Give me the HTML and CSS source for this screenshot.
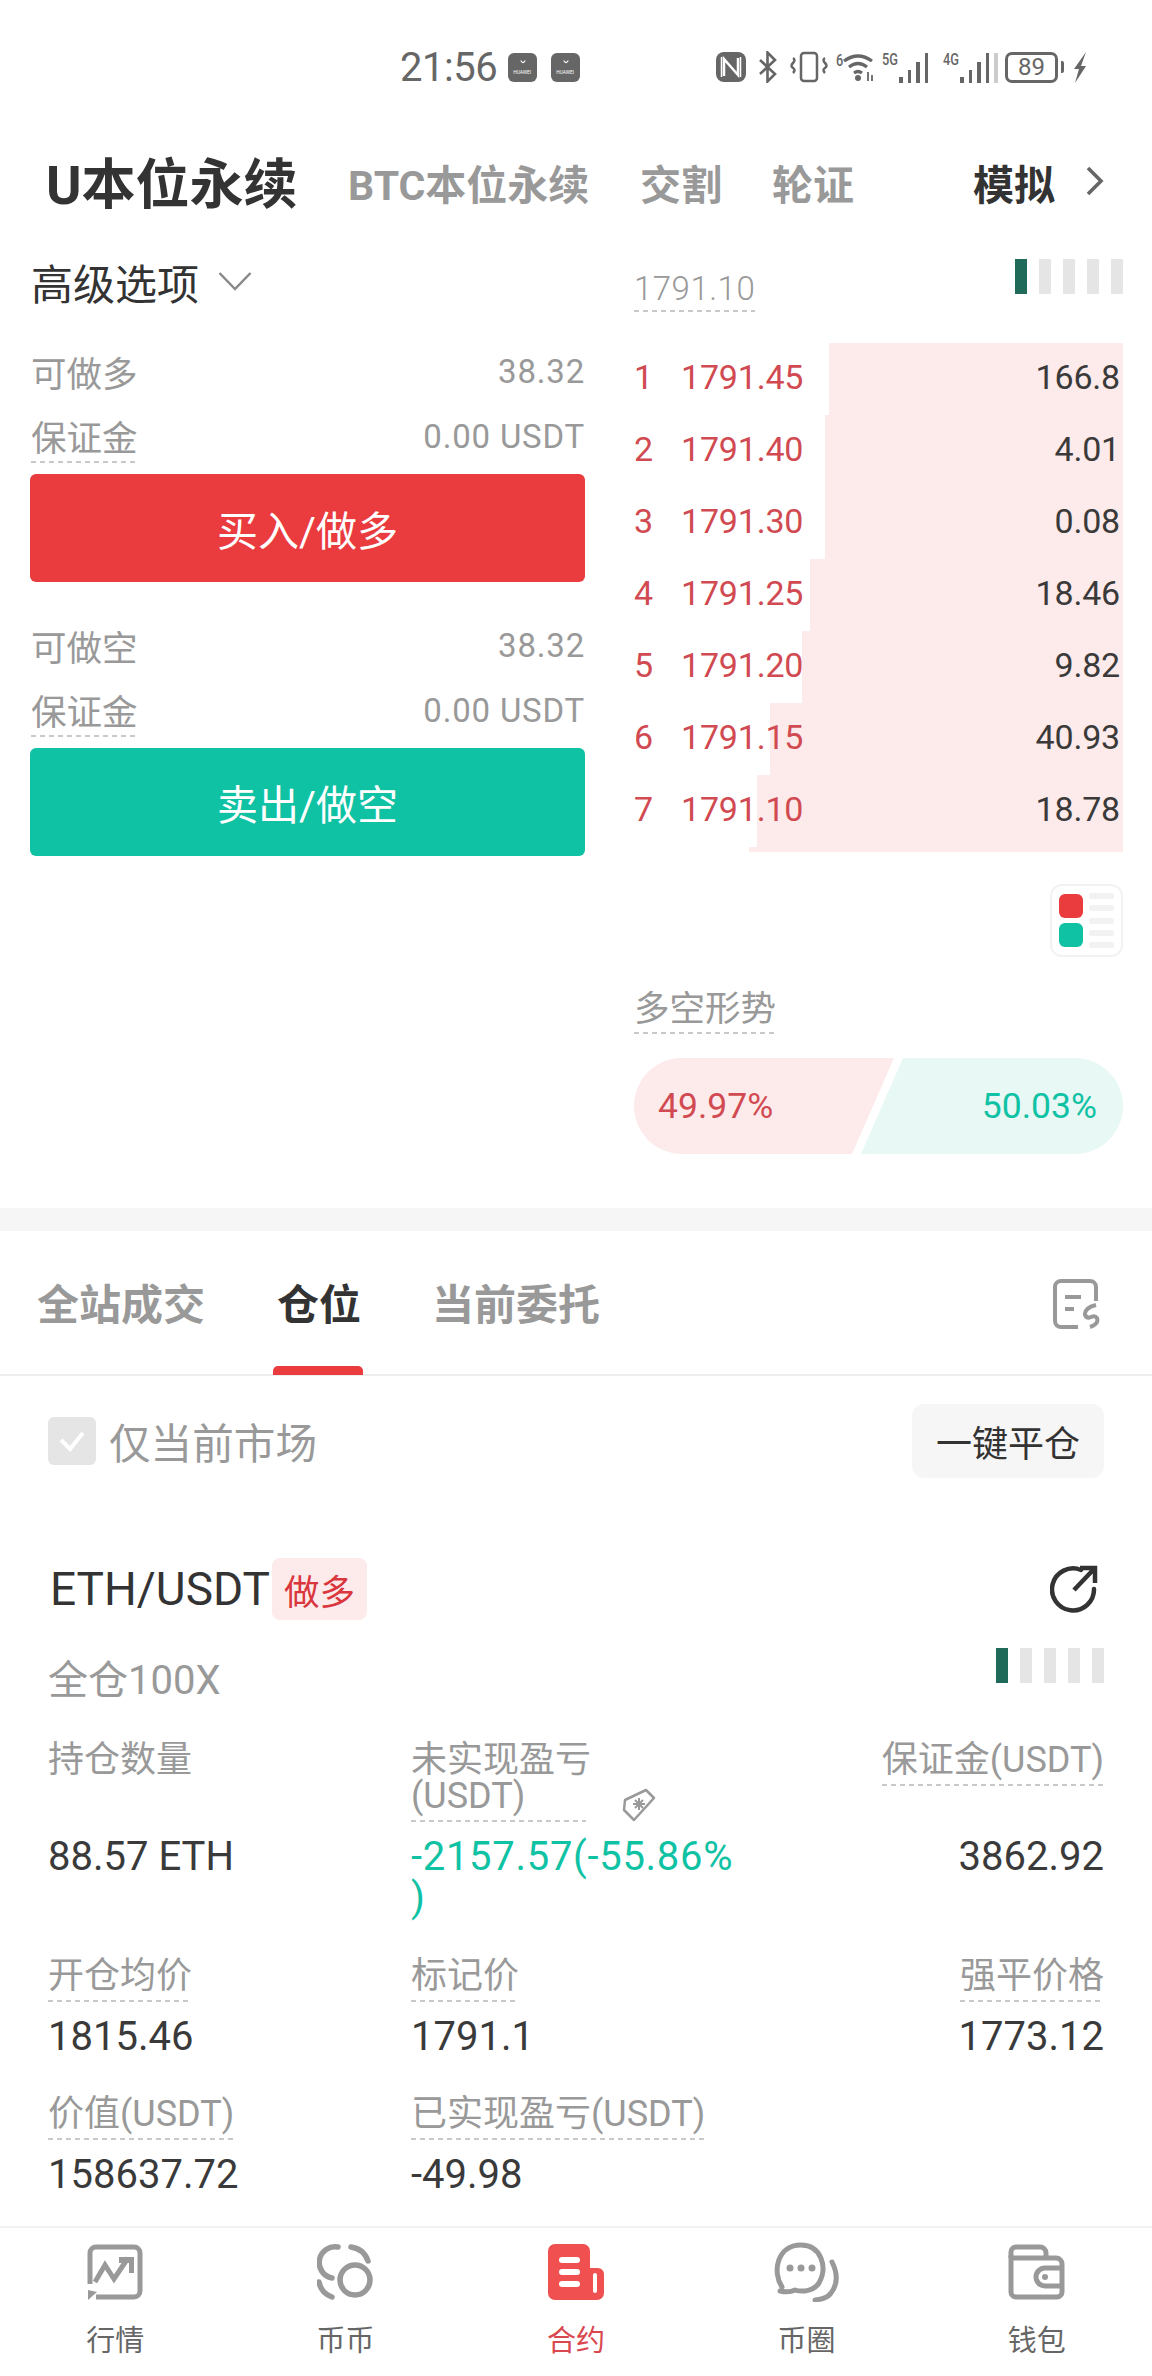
FILE: index.html
```html
<!DOCTYPE html>
<html lang="zh-CN">
<head>
<meta charset="utf-8">
<title>合约</title>
<link rel="stylesheet" href="styles.css">
</head>
<body>
<div class="page">
  <div class="status">
    <span class="clock">21:56</span>
    <span class="hw"><svg viewBox="0 0 28 28" width="14" height="8"><path d="M6 2q8 14 16 0" fill="none" stroke="#fff" stroke-width="4"/></svg><span class="hw-t">HUAWEI</span></span>
    <span class="hw hw2"><svg viewBox="0 0 28 28" width="14" height="8"><path d="M6 2q8 14 16 0" fill="none" stroke="#fff" stroke-width="4"/></svg><span class="hw-t">HUAWEI</span></span>
    <svg class="s-nfc" width="30" height="30" viewBox="0 0 30 30"><rect width="30" height="30" rx="8" fill="#666"/><path d="M8 24V7l14 16V6" fill="none" stroke="#fff" stroke-width="2.5"/><path d="M5.500 5v20M24.500 5v20" stroke="#fff" stroke-width="1.500"/></svg>
    <svg class="s-bt" width="21" height="32" viewBox="0 0 21 32"><path d="M3 9l15 14-7.500 7.500V1.500L18 9 3 23" fill="none" stroke="#666" stroke-width="2.600"/></svg>
    <svg class="s-vib" width="38" height="32" viewBox="0 0 38 32"><rect x="11" y="2" width="16" height="28" rx="3" fill="none" stroke="#666" stroke-width="2.500"/><path d="M3 7q3 2 0 5t0 5 0 5M35 7q-3 2 0 5t0 5 0 5" fill="none" stroke="#666" stroke-width="2.500"/></svg>
    <span class="s-wifi"><span class="s-tiny">6</span><svg width="32" height="30" viewBox="0 0 32 30"><path d="M2 9q14-10 28 0M7 15q9-7 18 0M12 21q4-3 8 0" fill="none" stroke="#666" stroke-width="3.200"/><circle cx="16" cy="26" r="3" fill="#666"/><path d="M26 20v9M30 23v6" stroke="#666" stroke-width="1.800"/></svg></span>
    <span class="s-sig"><span class="s-tiny">5G</span><span class="bars"><i class="b1"></i><i class="b2"></i><i class="b3"></i><i class="b4"></i></span></span>
    <span class="s-sig s-sig2"><span class="s-tiny">4G</span><span class="bars"><i class="b1"></i><i class="b2"></i><i class="b3"></i><i class="b4"></i><i class="b5"></i></span></span>
    <span class="batt"><span class="batt-num">89</span></span><span class="batt-tip"></span>
    <svg class="s-chg" width="14" height="32" viewBox="0 0 14 32"><path d="M13 1L1 18h5L2 32l11-17H8z" fill="#666"/></svg>
  </div>

  <div class="market-tabs">
    <span class="mt-main">U本位永续</span>
    <span class="mt mt-btc">BTC本位永续</span>
    <span class="mt mt-del">交割</span>
    <span class="mt mt-opt">轮证</span>
    <span class="mt-sim">模拟</span>
    <svg class="mt-more" width="20" height="32" viewBox="0 0 20 32"><path d="M3 3l13 13L3 29" fill="none" stroke="#666" stroke-width="3.600"/></svg>
  </div>

  <div class="trade">
    <div class="trade-left">
      <div class="adv"><span>高级选项</span><svg width="34" height="20" viewBox="0 0 34 20"><path d="M1.500 2L17 18 32.500 2" fill="none" stroke="#888" stroke-width="2.500"/></svg></div>
      <div class="kv"><span>可做多</span><span class="num">38.32</span></div>
      <div class="kv"><span class="dash">保证金</span><span class="num">0.00 USDT</span></div>
      <div class="btn btn-buy">买入/做多</div>
      <div class="kv kv-gap"><span>可做空</span><span class="num">38.32</span></div>
      <div class="kv"><span class="dash">保证金</span><span class="num">0.00 USDT</span></div>
      <div class="btn btn-sell">卖出/做空</div>
    </div>
    <div class="trade-right">
      <div class="book-head"><span class="dash price-head">1791.10</span><span class="lev"><i class="on"></i><i></i><i></i><i></i><i></i></span></div>
      <div class="book">
        <div class="row"><span class="bar" style="width:294px"></span><span class="rank">1</span><span class="px">1791.45</span><span class="qty">166.8</span></div>
        <div class="row"><span class="bar" style="width:298px"></span><span class="rank">2</span><span class="px">1791.40</span><span class="qty">4.01</span></div>
        <div class="row"><span class="bar" style="width:298px"></span><span class="rank">3</span><span class="px">1791.30</span><span class="qty">0.08</span></div>
        <div class="row"><span class="bar" style="width:313px"></span><span class="rank">4</span><span class="px">1791.25</span><span class="qty">18.46</span></div>
        <div class="row"><span class="bar" style="width:321px"></span><span class="rank">5</span><span class="px">1791.20</span><span class="qty">9.82</span></div>
        <div class="row"><span class="bar" style="width:353px"></span><span class="rank">6</span><span class="px">1791.15</span><span class="qty">40.93</span></div>
        <div class="row"><span class="bar" style="width:366px"></span><span class="rank">7</span><span class="px">1791.10</span><span class="qty">18.78</span></div>
        <div class="sliver"></div>
      </div>
      <div class="mode-wrap">
        <div class="mode">
          <div class="mode-blocks"><i class="mr"></i><i class="mg"></i></div>
          <div class="mode-lines"><i></i><i></i><i></i><i></i><i></i></div>
        </div>
      </div>
      <div class="trend-title"><span class="dash">多空形势</span></div>
      <div class="pill">
        <svg class="pill-bg" width="489" height="96" viewBox="0 0 489 96"><path d="M48 0H260L218 96H48A48 48 0 0 1 48 0Z" fill="#fdeaea"/><path d="M269 0H441A48 48 0 0 1 441 96H227Z" fill="#e7f8f5"/></svg>
        <span class="pill-l">49.97%</span><span class="pill-r">50.03%</span>
      </div>
    </div>
  </div>

  <div class="band"></div>

  <div class="pos-tabs">
    <span class="pt pt1">全站成交</span>
    <span class="pt pt-on">仓位</span>
    <span class="pt pt3">当前委托</span>
    <svg class="pt-ic" width="48" height="50" viewBox="0 0 48 50"><path d="M44 22V8a6 6 0 0 0-6-6H9a6 6 0 0 0-6 6v34a6 6 0 0 0 6 6h17" fill="none" stroke="#999" stroke-width="4"/><path d="M13 18h16M13 30h9" stroke="#999" stroke-width="4"/><path d="M44 26q-12 3-11 10 2 4 6 2t6 1q2 6-7 9" fill="none" stroke="#999" stroke-width="4"/></svg>
  </div>

  <div class="filter">
    <div class="only">
      <span class="check"><svg width="30" height="24" viewBox="0 0 30 24"><path d="M4 11l9 9L26 4" fill="none" stroke="#fff" stroke-width="4"/></svg></span>
      <span>仅当前市场</span>
    </div>
    <div class="close-all">一键平仓</div>
  </div>

  <div class="pos">
    <div class="pos-head">
      <span class="sym">ETH/USDT</span><span class="tag">做多</span>
      <svg class="share" width="48" height="50" viewBox="0 0 48 50"><path d="M31 6A21 21 0 1 0 44 25" fill="none" stroke="#333" stroke-width="4.500" stroke-linecap="round"/><path d="M24 26L44 5M30 4h15v15" fill="none" stroke="#333" stroke-width="4.500"/></svg>
    </div>
    <div class="pos-sub"><span>全仓100X</span><span class="lev lev2"><i class="on"></i><i></i><i></i><i></i><i></i></span></div>

    <div class="stats stats-l1">
      <span class="lab">持仓数量</span>
      <span class="lab lab-m"><span class="dash dash-w">未实现盈亏<br>(USDT)</span><svg class="tagic" width="34" height="34" viewBox="0 0 34 34"><path d="M24 2l8 8-20 22-10-10 1-10z" fill="none" stroke="#999" stroke-width="2.500" stroke-linejoin="round"/><path d="M17 10v12M11 16h12M13 12l8 8M21 12l-8 8" stroke="#999" stroke-width="2"/></svg></span>
      <span class="lab lab-r"><span class="dash">保证金(USDT)</span></span>
    </div>
    <div class="stats stats-v1">
      <span class="val">88.57 ETH</span>
      <span class="val val-g">-2157.57(-55.86%<br>)</span>
      <span class="val val-r">3862.92</span>
    </div>
    <div class="stats stats-l2">
      <span class="lab"><span class="dash">开仓均价</span></span>
      <span class="lab"><span class="dash">标记价</span></span>
      <span class="lab lab-r"><span class="dash">强平价格</span></span>
    </div>
    <div class="stats stats-v2">
      <span class="val">1815.46</span>
      <span class="val">1791.1</span>
      <span class="val val-r">1773.12</span>
    </div>
    <div class="stats stats-l2">
      <span class="lab"><span class="dash">价值(USDT)</span></span>
      <span class="lab"><span class="dash">已实现盈亏(USDT)</span></span>
      <span class="lab"></span>
    </div>
    <div class="stats stats-v2">
      <span class="val">158637.72</span>
      <span class="val">-49.98</span>
      <span class="val"></span>
    </div>
  </div>

  <div class="tabbar">
    <div class="tb">
      <svg width="56" height="56" viewBox="0 0 56 56"><path d="M3 40V9a6 6 0 0 1 6-6h38a6 6 0 0 1 6 6v38a6 6 0 0 1-6 6H9" fill="none" stroke="#999" stroke-width="5"/><path d="M8 38l10-17 9 14 14-21" fill="none" stroke="#999" stroke-width="5"/><path d="M32 13h15v16h-5v-10h-10z" fill="#999"/><path d="M1 56l0-10 9 2z" fill="#999"/></svg>
      <span>行情</span>
    </div>
    <div class="tb">
      <svg width="57" height="56" viewBox="0 0 57 56"><path d="M15 34A15 15 0 0 1 21 3" fill="none" stroke="#999" stroke-width="5.500" stroke-linecap="round"/><path d="M34 3q13 2 17 14" fill="none" stroke="#999" stroke-width="5.500" stroke-linecap="round"/><circle cx="38" cy="36" r="15" fill="none" stroke="#999" stroke-width="5.500"/><path d="M2 38q2 11 13 15" fill="none" stroke="#999" stroke-width="5.500" stroke-linecap="round"/></svg>
      <span>币币</span>
    </div>
    <div class="tb tb-on">
      <svg width="56" height="56" viewBox="0 0 56 56"><path d="M7 0H35a7 7 0 0 1 7 7V24h8a6 6 0 0 1 6 6V49a7 7 0 0 1-7 7H7a7 7 0 0 1-7-7V7a7 7 0 0 1 7-7Z" fill="#f05050"/><rect x="11" y="13" width="21" height="6" rx="3" fill="#fff"/><rect x="11" y="25" width="21" height="6" rx="3" fill="#fff"/><rect x="11" y="37" width="21" height="6" rx="3" fill="#fff"/><rect x="45" y="29" width="4" height="20" rx="2" fill="#fff"/></svg>
      <span>合约</span>
    </div>
    <div class="tb">
      <svg width="65" height="60" viewBox="0 0 65 60"><path d="M8 45C-2 30 3 3 27 3c20 0 27 22 18 38-6 9-18 9-24 7q-6 3-15 1" fill="none" stroke="#999" stroke-width="5" stroke-linecap="round" stroke-linejoin="round"/><circle cx="16" cy="26" r="3.500" fill="#999"/><circle cx="27" cy="26" r="3.500" fill="#999"/><circle cx="38" cy="26" r="3.500" fill="#999"/><path d="M58 20c6 12 6 22-1 31q-4 6-16 7" fill="none" stroke="#999" stroke-width="5" stroke-linecap="round"/></svg>
      <span>币圈</span>
    </div>
    <div class="tb">
      <svg width="57" height="56" viewBox="0 0 57 56"><path d="M3 14V8a5 5 0 0 1 5-5H32a6 6 0 0 1 6 6v5" fill="none" stroke="#999" stroke-width="5"/><path d="M3 14H48a6 6 0 0 1 6 6V48a5 5 0 0 1-5 5H8a5 5 0 0 1-5-5Z" fill="none" stroke="#999" stroke-width="5"/><path d="M54 24H37a9 9 0 0 0 0 18H54" fill="none" stroke="#999" stroke-width="5"/><circle cx="37" cy="33" r="3" fill="#999"/></svg>
      <span>钱包</span>
    </div>
  </div>
</div>
</body>
</html>
```

FILE: styles.css
```css
* { box-sizing: border-box; }
html, body { margin: 0; padding: 0; background: #fff; }
body { font-family: Roboto, "Noto Sans CJK SC", sans-serif; color: #333; }
.page { width: 1152px; height: 2376px; overflow: hidden; position: relative; }

/* status bar */
.status { height: 134px; display: flex; align-items: center; padding-left: 400px; color: #666; }
.clock { font-size: 40px; letter-spacing: -.5px; width: 108px; color: #666; }
.hw { width: 29px; height: 29px; border-radius: 6px; background: #666; display: flex; flex-direction: column; align-items: center; justify-content: center; }
.hw2 { margin-left: 14px; }
.hw-t { font-size: 6px; line-height: 7px; color: #fff; letter-spacing: 0; transform: scaleX(.8); }
.s-nfc { margin-left: 136px; }
.s-bt { margin-left: 11px; }
.s-vib { margin-left: 12px; }
.s-wifi { display: flex; margin-left: 8px; align-items: flex-start; width: 38px; }
.s-tiny { font-size: 17px; line-height: 16px; color: #666; font-weight: 500; transform: scaleX(.75); transform-origin: left; }
.s-wifi .s-tiny { width: 6px; }
.s-sig { display: flex; margin-left: 8px; width: 49px; height: 32px; align-items: flex-start; }
.s-sig .s-tiny { width: 15px; }
.s-sig2 { margin-left: 12px; width: 50px; }
.bars { display: flex; align-items: flex-end; gap: 5px; height: 32px; margin-left: 2px; }
.bars i { width: 3.5px; background: #666; display: block; }
.bars .b1 { height: 6px; }
.bars .b2 { height: 13px; }
.bars .b3 { height: 21px; }
.bars .b4 { height: 30px; }
.bars .b5 { height: 30px; background: #ccc; }
.batt { width: 53px; height: 31px; margin-left: 12px; border: 3px solid #666; border-radius: 7px; display: flex; align-items: center; justify-content: center; }
.batt-num { font-size: 24px; line-height: 24px; color: #666; }
.batt-tip { width: 3px; height: 12px; background: #666; margin-left: 3px; border-radius: 0 2px 2px 0; }
.s-chg { margin-left: 9px; }

/* market tabs */
.market-tabs { height: 96px; display: flex; align-items: center; padding-left: 46px; }
.mt-main { font-size: 54px; font-weight: 700; color: #333; width: 302px; margin-top: -3px; }
.mt, .mt-sim { font-size: 41px; font-weight: 700; color: #999; }
.mt-btc { width: 292px; }
.mt-del { width: 132px; }
.mt-opt { width: 201px; }
.mt-sim { color: #333; width: 112px; }
.mt-more { margin-top: -3px; }

/* trade area */
.trade { height: 978px; display: grid; grid-template-columns: 604px 489px; padding-left: 30px; column-gap: 0; }
.trade-left { width: 555px; }
.adv { height: 102px; display: flex; align-items: center; gap: 19px; font-size: 42px; color: #333; padding-left: 1px; }
.kv { height: 65px; display: flex; justify-content: space-between; align-items: center; font-size: 35.5px; color: #999; padding: 0 0 0 1px; }
.adv + .kv { margin-top: 7px; }
.kv-gap { margin-top: 31px; }
.num { font-size: 33px; letter-spacing: .8px; }
.dash { display: inline-block; padding-bottom: 2px; background-image: repeating-linear-gradient(90deg, #c9c9c9 0 5px, transparent 5px 9px); background-size: 100% 2px; background-position: left bottom; background-repeat: no-repeat; }
.btn { height: 108px; margin-top: 5px; border-radius: 6px; color: #fff; font-size: 41px; display: flex; align-items: center; justify-content: center; }
.btn-buy { background: #ea3b3f; }
.btn-sell { background: #10c2a4; }

.book-head { height: 113px; display: flex; justify-content: space-between; align-items: flex-start; }
.price-head { font-size: 33px; color: #999; margin-top: 38px; line-height: 42px; letter-spacing: .5px; font-weight: 300; }
.lev { display: flex; gap: 12px; margin-top: 29px; }
.lev i { width: 12px; height: 35px; background: #e5e5e5; display: block; }
.lev .on { background: #1f6a58; }
.book { width: 489px; }
.row { height: 72px; position: relative; display: flex; align-items: center; font-size: 34px; letter-spacing: -.2px; padding-bottom: 4px; }
.bar { position: absolute; right: 0; top: 0; bottom: 0; background: #fdeaea; }
.rank, .px, .qty { position: relative; }
.rank { width: 47px; color: #d14a52; text-align: left; }
.px { color: #d14a52; }
.qty { margin-left: auto; padding-right: 3px; color: #3a3a3a; }
.sliver { height: 5px; width: 374px; margin-left: 115px; background: #fdeaea; }
.mode-wrap { display: flex; justify-content: flex-end; margin-top: 32px; }
.mode { width: 73px; height: 73px; border: 2px solid #f2f2f2; border-radius: 12px; display: flex; padding: 6px 7px; gap: 6px; }
.mode-blocks { display: flex; flex-direction: column; gap: 5px; justify-content: center; }
.mode-blocks i { display: block; width: 24px; height: 24px; border-radius: 6px; }
.mr { background: #ea3b3f; }
.mg { background: #10c2a4; }
.mode-lines { flex: 1; display: flex; flex-direction: column; justify-content: space-between; padding: 1px 0; }
.mode-lines i { display: block; height: 6px; border-radius: 2px; background: #f2f2f2; }
.trend-title { margin-top: 29px; font-size: 35.5px; color: #999; line-height: 46px; }
.pill { margin-top: 24px; width: 489px; height: 96px; position: relative; display: flex; justify-content: space-between; align-items: center; padding: 0 26px 0 24px; font-size: 35.5px; }
.pill-bg { position: absolute; left: 0; top: 0; }
.pill-l { position: relative; color: #d14a52; }
.pill-r { position: relative; color: #10c2a4; }

.band { height: 23px; background: #f6f6f6; }

/* position tabs */
.pos-tabs { height: 145px; border-bottom: 2px solid #eee; display: flex; align-items: flex-start; padding-left: 37px; font-size: 42px; font-weight: 700; color: #999; }
.pt { line-height: 60px; margin-top: 45px; }
.pt1 { width: 240px; }
.pt-on { width: 155px; color: #333; position: relative; }
.pt-on::after { content: ""; position: absolute; left: -4px; top: 90px; width: 90px; height: 9px; border-radius: 5px 5px 0 0; background: #ea3b3f; }
.pt3 { width: 620px; }
.pt-ic { margin-top: 48px; }

.filter { height: 102px; padding: 28px 48px 0; display: flex; justify-content: space-between; }
.only { display: flex; align-items: center; gap: 13px; font-size: 41.6px; color: #999; height: 74px; }
.check { width: 48px; height: 48px; border-radius: 6px; background: #e5e5e5; display: flex; align-items: center; justify-content: center; }
.close-all { width: 192px; height: 74px; border-radius: 12px; background: #f6f6f6; color: #333; font-size: 36px; display: flex; align-items: center; justify-content: center; }

.pos { padding: 80px 48px 0 48px; }
.pos-head { height: 62px; display: flex; align-items: center; }
.sym { font-size: 46px; color: #333; padding-left: 2px; }
.tag { margin-left: 2px; width: 95px; height: 62px; border-radius: 8px; background: #fdeaea; color: #d9363e; font-size: 35.5px; display: flex; align-items: center; justify-content: center; }
.share { margin-left: auto; margin-right: 6px; }
.pos-sub { height: 122px; display: flex; justify-content: space-between; font-size: 40px; color: #999; padding-top: 36px; line-height: 50px; }
.pos-sub .lev2 { margin-top: -8px; }
.stats { display: grid; grid-template-columns: 363px 330px 1fr; }
.stats-l1 { height: 82px; }
.stats-v1 { height: 82px; margin-top: 12px; }
.stats-l2 { height: 44px; margin-top: 40px; }
.stats-v2 { height: 40px; margin-top: 14px; }
.lab { font-size: 36px; line-height: 36px; color: #999; display: block; white-space: nowrap; }
.lab-m { position: relative; }
.lab-r { text-align: right; }
.dash-w { width: 175px; padding-bottom: 8px; }
.lab .dash { padding-bottom: 8px; }
.tagic { position: absolute; left: 211px; top: 46px; }
.val { font-size: 40px; line-height: 41px; color: #3a3a3a; display: block; }
.val-g { color: #10c2a4; white-space: nowrap; letter-spacing: .7px; }
.val-r { text-align: right; }

/* tab bar */
.tabbar { position: absolute; left: 0; top: 2226px; width: 1152px; height: 150px; background: #fff; border-top: 2px solid #f2f2f2; display: grid; grid-template-columns: repeat(5, 1fr); }
.tb { display: flex; flex-direction: column; align-items: center; color: #666; font-size: 29px; }
.tb svg { height: 60px; margin-top: 14px; }
.tb span { line-height: 40px; margin-top: 19px; }
.tb-on { color: #d9474f; }
```
